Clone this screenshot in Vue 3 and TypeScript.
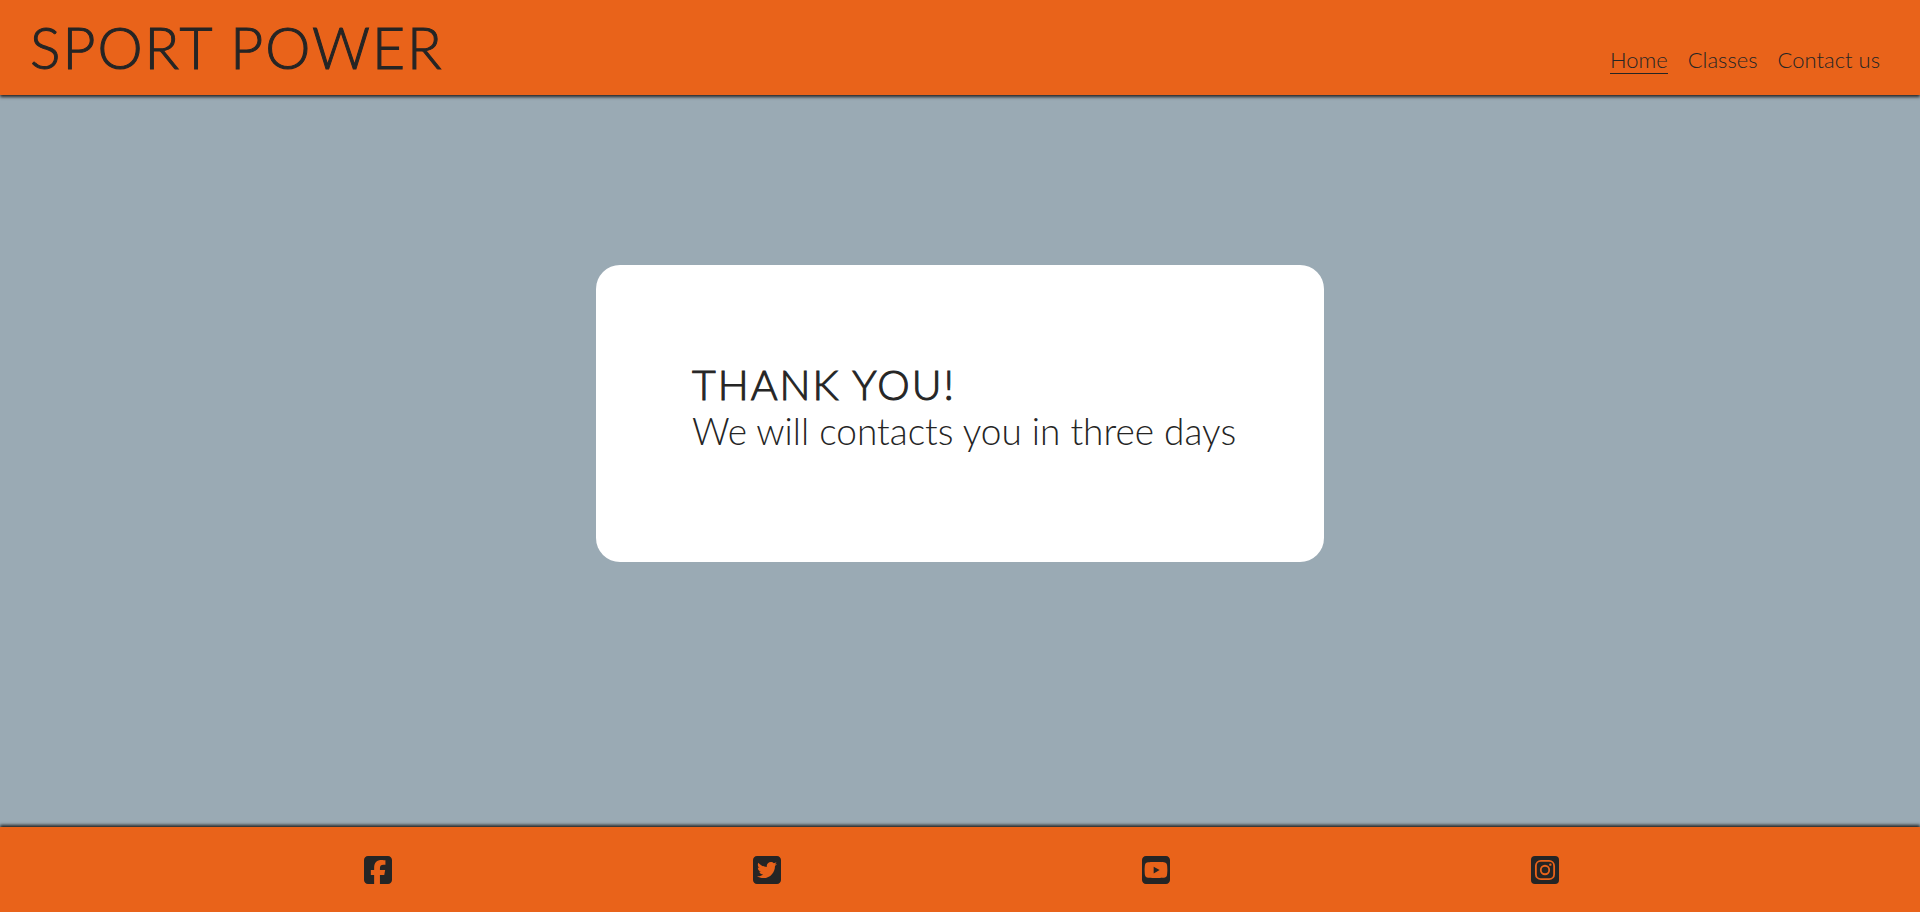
<script setup lang="ts">
interface NavItem {
  label: string
  current: boolean
}

const navItems: NavItem[] = [
  { label: 'Home', current: true },
  { label: 'Classes', current: false },
  { label: 'Contact us', current: false },
]
</script>

<template>
  <div class="page">
    <header class="header">
      <h1 class="logo">SPORT POWER</h1>
      <nav aria-label="Main">
        <ul class="menu">
          <li v-for="item in navItems" :key="item.label">
            <a
              href="#"
              class="menu-link"
              :class="{ active: item.current }"
              :aria-current="item.current ? 'page' : undefined"
            >{{ item.label }}</a>
          </li>
        </ul>
      </nav>
    </header>

    <main class="main">
      <section class="card">
        <h2 class="card-title">THANK YOU!</h2>
        <p class="card-text">We will contacts you in three days</p>
      </section>
    </main>

    <footer class="footer">
      <ul class="social">
        <li>
          <a href="#" aria-label="Facebook">
            <svg class="icon" viewBox="0 32 448 448" aria-hidden="true">
              <path d="M64 32C28.7 32 0 60.7 0 96V416c0 35.3 28.7 64 64 64h98.2V334.2H109.4V256h52.8V222.3c0-87.1 39.4-127.5 125-127.5c16.2 0 44.2 3.2 55.7 6.4V172c-6-.6-16.5-1-29.6-1c-42 0-58.2 15.9-58.2 57.2V256h83.6l-14.4 78.2H255V480H384c35.3 0 64-28.7 64-64V96c0-35.3-28.7-64-64-64H64z" />
            </svg>
          </a>
        </li>
        <li>
          <a href="#" aria-label="Twitter">
            <svg class="icon" viewBox="0 32 448 448" aria-hidden="true">
              <path d="M64 32C28.7 32 0 60.7 0 96V416c0 35.3 28.7 64 64 64H384c35.3 0 64-28.7 64-64V96c0-35.3-28.7-64-64-64H64zM351.3 199.3v0c0 86.7-66 186.6-186.6 186.6c-37.2 0-71.7-10.8-100.7-29.4c5.3 .6 10.4 .8 15.8 .8c30.7 0 58.9-10.4 81.4-28c-28.8-.6-53-19.5-61.3-45.5c10.1 1.5 19.2 1.5 29.6-1.2c-30-6.1-52.5-32.5-52.5-64.4v-.8c8.7 4.9 18.9 7.9 29.6 8.3c-9-6-16.4-14.1-21.5-23.6s-7.8-20.2-7.7-31c0-12.2 3.2-23.4 8.9-33.1c32.3 39.8 80.8 65.8 135.2 68.6c-9.3-44.5 24-80.6 64-80.6c18.9 0 35.9 7.9 47.9 20.7c14.8-2.8 29-8.3 41.6-15.8c-4.9 15.2-15.2 28-28.8 36.1c13.2-1.4 26-5.1 37.8-10.2c-8.9 13.1-20.1 24.7-32.9 34c.2 2.8 .2 5.7 .2 8.5z" />
            </svg>
          </a>
        </li>
        <li>
          <a href="#" aria-label="YouTube">
            <svg class="icon" viewBox="0 32 448 448" aria-hidden="true">
              <path d="M282 256.2l-95.2-54.1V310.3L282 256.2zM384 32H64C28.7 32 0 60.7 0 96V416c0 35.3 28.7 64 64 64H384c35.3 0 64-28.7 64-64V96c0-35.3-28.7-64-64-64zm14.4 136.1c7.6 28.6 7.6 88.2 7.6 88.2s0 59.6-7.6 88.1c-4.2 15.8-16.5 27.7-32.2 31.9C337.9 384 224 384 224 384s-113.9 0-142.2-7.6c-15.7-4.2-28-16.1-32.2-31.9C42 315.9 42 256.3 42 256.3s0-59.7 7.6-88.2c4.2-15.8 16.5-28.2 32.2-32.4C110.1 128 224 128 224 128s113.9 0 142.2 7.7c15.7 4.2 28 16.6 32.2 32.4z" />
            </svg>
          </a>
        </li>
        <li>
          <a href="#" aria-label="Instagram">
            <svg class="icon" viewBox="0 32 448 448" aria-hidden="true">
              <rect x="0" y="32" width="448" height="448" rx="64" />
              <rect class="cut-line" x="78" y="110" width="292" height="292" rx="80" />
              <circle class="cut-line" cx="224" cy="256" r="67.6" />
              <circle class="cut-dot" cx="309.5" cy="170.7" r="19.1" />
            </svg>
          </a>
        </li>
      </ul>
    </footer>
  </div>
</template>

<style>
body {
  margin: 0;
}
</style>

<style scoped>
.page {
  display: flex;
  flex-direction: column;
  min-height: 100vh;
  background: #9aaab4;
  color: #252525;
  font-family: Lato, "Open Sans", sans-serif;
}

.header {
  display: flex;
  justify-content: space-between;
  align-items: center;
  padding: 12px 40px 13px 30px;
  background: #e9631a;
  box-shadow: 0 2px 3px #252525;
}

.logo {
  margin: 0;
  font-size: 57px;
  font-weight: 300;
  line-height: 70px;
  letter-spacing: 2px;
  -webkit-text-stroke: 1px currentColor;
}

.menu,
.social {
  display: flex;
  margin: 0;
  padding: 0;
  list-style: none;
}

.menu {
  gap: 20px;
  padding-top: 26px;
}

.menu-link {
  display: block;
  border-bottom: 1px solid transparent;
  color: inherit;
  font-size: 22px;
  font-weight: 300;
  line-height: 26px;
  text-decoration: none;
}

.menu-link.active {
  border-bottom-color: currentColor;
}

.main {
  display: flex;
  flex: 1;
  justify-content: center;
  align-items: flex-start;
  padding: 170px 24px;
}

.card {
  box-sizing: border-box;
  width: 728px;
  padding: 96px 80px 109px 96px;
  border-radius: 24px;
  background: #fff;
}

.card-title,
.card-text {
  margin: 0;
}

.card-title {
  font-size: 41px;
  font-weight: 300;
  line-height: 48px;
  letter-spacing: 2px;
  -webkit-text-stroke: 1px currentColor;
}

.card-text {
  font-size: 37px;
  font-weight: 300;
  line-height: 44px;
}

.footer {
  padding: 29px 0 28px;
  background: #e9631a;
  box-shadow: 0 -2px 3px #252525;
}

.social {
  justify-content: space-evenly;
  padding-left: 3px;
}

.social a {
  display: block;
  color: inherit;
}

.icon {
  display: block;
  width: 28px;
  height: 28px;
  fill: currentColor;
}

.cut-line {
  fill: none;
  stroke: #e9631a;
  stroke-width: 29;
}

.cut-dot {
  fill: #e9631a;
}
</style>
